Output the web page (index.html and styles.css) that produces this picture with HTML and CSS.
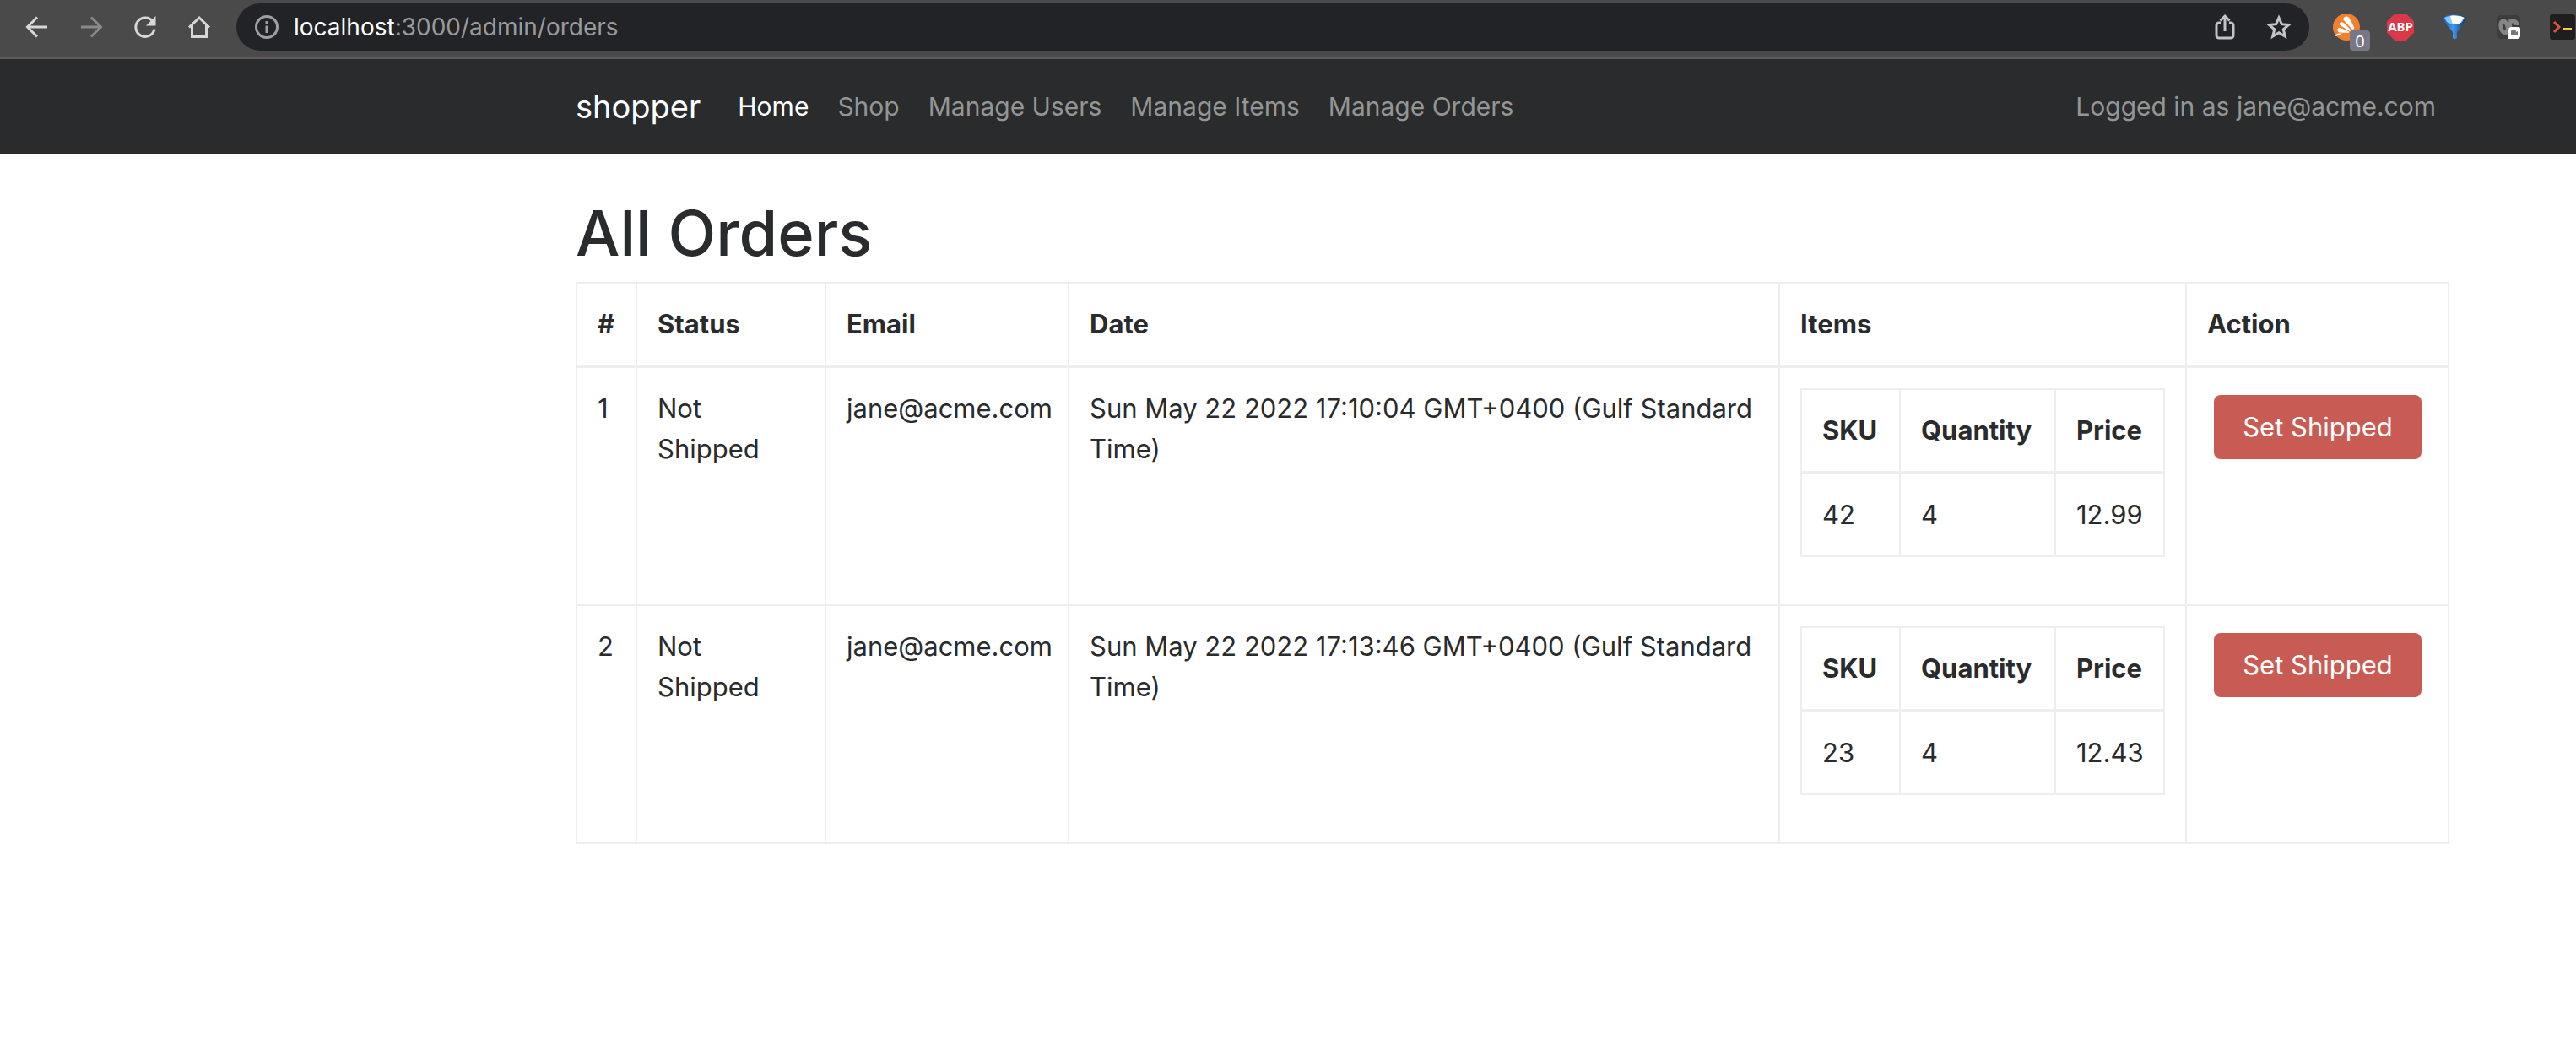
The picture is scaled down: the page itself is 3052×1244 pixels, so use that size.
FILE: index.html
```html
<!DOCTYPE html>
<html lang="en">
<head>
<meta charset="utf-8">
<title>shopper</title>
<link rel="stylesheet" href="styles.css">
</head>
<body>
<header class="chrome">
  <div class="chrome-nav">
    <button class="icon-btn" type="button" aria-label="Back">
      <svg viewBox="0 0 32 32"><path d="M28 16H5M16 4.500L4.500 16 16 27.500" /></svg>
    </button>
    <button class="icon-btn dim" type="button" aria-label="Forward">
      <svg viewBox="0 0 32 32"><path d="M4 16h23M16 4.500L27.500 16 16 27.500" /></svg>
    </button>
    <button class="icon-btn" type="button" aria-label="Reload">
      <svg viewBox="0 0 32 32"><path d="M25 9.500A11.200 11.200 0 1 0 27 18.500" /><path class="solid" d="M28.500 3v11.500H17z" /></svg>
    </button>
    <button class="icon-btn" type="button" aria-label="Home">
      <svg viewBox="0 0 32 32"><path d="M4 16.500L16 5l12 11.500M7.500 14v13.500h17V14" /></svg>
    </button>
  </div>
  <div class="address">
    <svg class="info" viewBox="0 0 32 32" aria-hidden="true"><circle cx="16" cy="16" r="12.500"/><path d="M16 14.500V23M16 9v3"/></svg>
    <span class="url"><b>localhost</b>:3000/admin/orders</span>
    <button class="icon-btn share" type="button" aria-label="Share">
      <svg viewBox="0 0 32 32"><path d="M11 11H9a3 3 0 0 0-3 3v12a3 3 0 0 0 3 3h14a3 3 0 0 0 3-3V14a3 3 0 0 0-3-3h-2M16 21V4M10.500 8.500L16 3l5.500 5.500" /></svg>
    </button>
    <button class="icon-btn" type="button" aria-label="Bookmark">
      <svg viewBox="0 0 32 32"><path d="M16 5l3.300 7.700 8.400.7-6.400 5.500 2 8.200L16 22.700l-7.300 4.400 2-8.200-6.400-5.500 8.400-.7z" /></svg>
    </button>
  </div>
  <div class="extensions">
    <button class="ext" type="button" aria-label="Avast">
      <svg viewBox="0 0 32 32"><circle cx="16" cy="16" r="16" fill="#f1802f"/><path fill="#fff" d="M12.500 7.500C11.500 4 17 1.500 19.500 5.500L25 16c1 2.500-1.500 3.500-3 2zM8 13.500c-1-3 2.500-4.500 5-2.200l8 8c.5 1-.5 2-2 1.200zM5.500 19.500c0-2.500 2.500-3 4.500-2l9.500 4-1 1.500-10-.5c-2 0-3-1-3-3zM3 26c2-3 5-2.500 8-2.200L3.500 27z"/></svg>
      <span class="count">0</span>
    </button>
    <button class="ext" type="button" aria-label="Adblock Plus">
      <svg viewBox="0 0 32 32"><path fill="#dd374a" d="M9.500 0h13L32 9.500v13L22.500 32h-13L0 22.500v-13z"/><text class="abp" x="16" y="21" text-anchor="middle">ABP</text></svg>
    </button>
    <button class="ext" type="button" aria-label="Filter">
      <svg viewBox="0 0 32 32"><defs><linearGradient id="funnel" x1="0" x2="1"><stop offset="0" stop-color="#1458b0"/><stop offset=".45" stop-color="#3f9af0"/><stop offset="1" stop-color="#0a2f70"/></linearGradient></defs><path fill="url(#funnel)" d="M2.500 5C6 .5 26 .5 29.500 5c0 3-4 9-10.500 17v7c-1 1.500-4 1.500-5 0v-7C7 14 2.500 8 2.500 5z"/><path fill="#8cc8fa" d="M4 5c5-3.500 19-3.500 24 0l-3 5c-4 3.500-13 3.500-18 0z"/><path fill="#fff" d="M11 3c4-1 12-.5 16 2l-5 7.500c-3 .8-6 .6-8 0z"/></svg>
    </button>
    <button class="ext" type="button" aria-label="Meeting tools">
      <svg viewBox="0 0 32 32"><rect x="2" y="2" width="28" height="28" rx="5" fill="#3c3c3c"/><g fill="none" stroke="#858585" stroke-width="5"><ellipse cx="11" cy="16" rx="4" ry="7" transform="rotate(-14 11 16)"/><path d="M17 10c4-2 9-1 9 4M18 10c-1 5 0 9 2 12"/></g><path fill="#fff" d="M20 16h8a2 2 0 0 1 2 2v8a4 4 0 0 1-4 4H16V20a4 4 0 0 1 4-4z"/><path fill="#777" d="M20 20h5v2l2-1v5l-2-1v1h-5a1 1 0 0 1-1-1v-4a1 1 0 0 1 1-1z"/></svg>
    </button>
    <button class="ext" type="button" aria-label="Terminal">
      <svg viewBox="0 0 32 32"><rect x="1" y="1" width="30" height="30" rx="3" fill="#1e1e1e"/><path fill="none" stroke="#d9503f" stroke-width="3" d="M6 10l6 6-6 6"/><path fill="#f2c94c" d="M17 17h10v3H17z"/></svg>
    </button>
  </div>
</header>

<nav class="navbar">
  <a class="brand" href="#">shopper</a>
  <ul class="links">
    <li><a class="active" href="#">Home</a></li>
    <li><a href="#">Shop</a></li>
    <li><a href="#">Manage Users</a></li>
    <li><a href="#">Manage Items</a></li>
    <li><a href="#">Manage Orders</a></li>
  </ul>
  <span class="account">Logged in as jane@acme.com</span>
</nav>

<main class="page">
  <h1>All Orders</h1>
  <table class="table orders">
    <colgroup><col class="c-num"><col class="c-status"><col class="c-email"><col><col class="c-items"><col class="c-action"></colgroup>
    <thead>
      <tr><th>#</th><th>Status</th><th>Email</th><th>Date</th><th>Items</th><th>Action</th></tr>
    </thead>
    <tbody>
      <tr>
        <td>1</td><td>Not Shipped</td><td>jane@acme.com</td>
        <td>Sun May 22 2022 17:10:04 GMT+0400 (Gulf Standard Time)</td>
        <td>
          <table class="table items">
            <colgroup><col class="c-sku"><col class="c-qty"><col></colgroup>
            <thead><tr><th>SKU</th><th>Quantity</th><th>Price</th></tr></thead>
            <tbody><tr><td>42</td><td>4</td><td>12.99</td></tr></tbody>
          </table>
        </td>
        <td><button class="btn-danger" type="button">Set Shipped</button></td>
      </tr>
      <tr>
        <td>2</td><td>Not Shipped</td><td>jane@acme.com</td>
        <td>Sun May 22 2022 17:13:46 GMT+0400 (Gulf Standard Time)</td>
        <td>
          <table class="table items">
            <colgroup><col class="c-sku"><col class="c-qty"><col></colgroup>
            <thead><tr><th>SKU</th><th>Quantity</th><th>Price</th></tr></thead>
            <tbody><tr><td>23</td><td>4</td><td>12.43</td></tr></tbody>
          </table>
        </td>
        <td><button class="btn-danger" type="button">Set Shipped</button></td>
      </tr>
    </tbody>
  </table>
</main>
</body>
</html>
```
FILE: styles.css
```css
* { box-sizing: border-box; }

body {
  margin: 0;
  background: #fff;
  color: #292b2c;
  font: 400 31px/48px Inter, "Liberation Sans", sans-serif;
}

button { font: inherit; border: 0; background: none; padding: 0; }
a { color: inherit; text-decoration: none; }
svg { display: block; }

/* Browser toolbar */
.chrome {
  display: flex;
  align-items: center;
  height: 70px;
  padding: 4px 0 8px 28px;
  background: #4a4a4a;
  border-bottom: 2px solid #5c5c5c;
  overflow: hidden;
}
.chrome-nav { display: flex; gap: 32px; width: 252px; flex: none; }
.icon-btn { color: #d8d8d8; flex: none; }
.icon-btn.dim { color: #8a8a8a; }
.icon-btn svg, .info { width: 32px; height: 32px; fill: none; stroke: currentColor; stroke-width: 3; }
.icon-btn .solid { fill: currentColor; stroke: none; }
.address {
  display: flex;
  align-items: center;
  flex: 1;
  height: 56px;
  padding: 0 20px;
  border-radius: 28px;
  background: #222327;
}
.info { color: #9aa0a6; margin-right: 16px; }
.address .icon-btn { color: #c4c4c4; }
.share { margin-right: 32px; }
.url { flex: 1; font-size: 28px; line-height: 32px; color: #9a9a9a; }
.url b { font-weight: 400; color: #fff; }
.extensions { display: flex; gap: 32px; padding-left: 28px; flex: none; }
.ext { position: relative; width: 32px; height: 32px; }
.ext svg { width: 32px; height: 32px; }
.abp { font: 700 15px "Noto Sans", sans-serif; fill: #fff; }
.count {
  position: absolute;
  left: 20px;
  top: 20px;
  width: 24px;
  height: 24px;
  border-radius: 4px;
  background: #777785;
  color: #fff;
  font: 20px/26px "Noto Sans", sans-serif;
}

/* Site navigation */
.navbar {
  display: flex;
  align-items: center;
  padding: 32px 166px 32px 682px;
  background: #292b2c;
  color: #949595;
}
.brand { color: #fff; font-size: 38px; margin-right: 44px; }
.links { display: flex; gap: 34px; margin: 0; padding: 0; list-style: none; font-size: 30px; }
.active { color: #fff; }
.account { margin-left: auto; font-size: 30px; }

/* Orders page */
.page { padding: 52px 150px 0 682px; }
h1 { margin: 0 0 16px; font-size: 74px; font-weight: 500; line-height: 84px; }

.table { width: 100%; table-layout: fixed; border-collapse: collapse; }
.table th, .table td {
  padding: 24px;
  border: 2px solid #eceeef;
  text-align: left;
  vertical-align: top;
}
.table thead th { border-bottom-width: 4px; font-weight: 700; }
.items { margin-bottom: 32px; }

.c-num { width: 71px; }
.c-status { width: 224px; }
.c-email { width: 288px; }
.c-items { width: 482px; }
.c-action { width: 311px; }
.c-sku { width: 117px; }
.c-qty { width: 184px; }

.btn-danger {
  margin: 8px;
  width: 246px;
  height: 76px;
  border-radius: 8px;
  background: #c85c55;
  color: #fff;
}
```
